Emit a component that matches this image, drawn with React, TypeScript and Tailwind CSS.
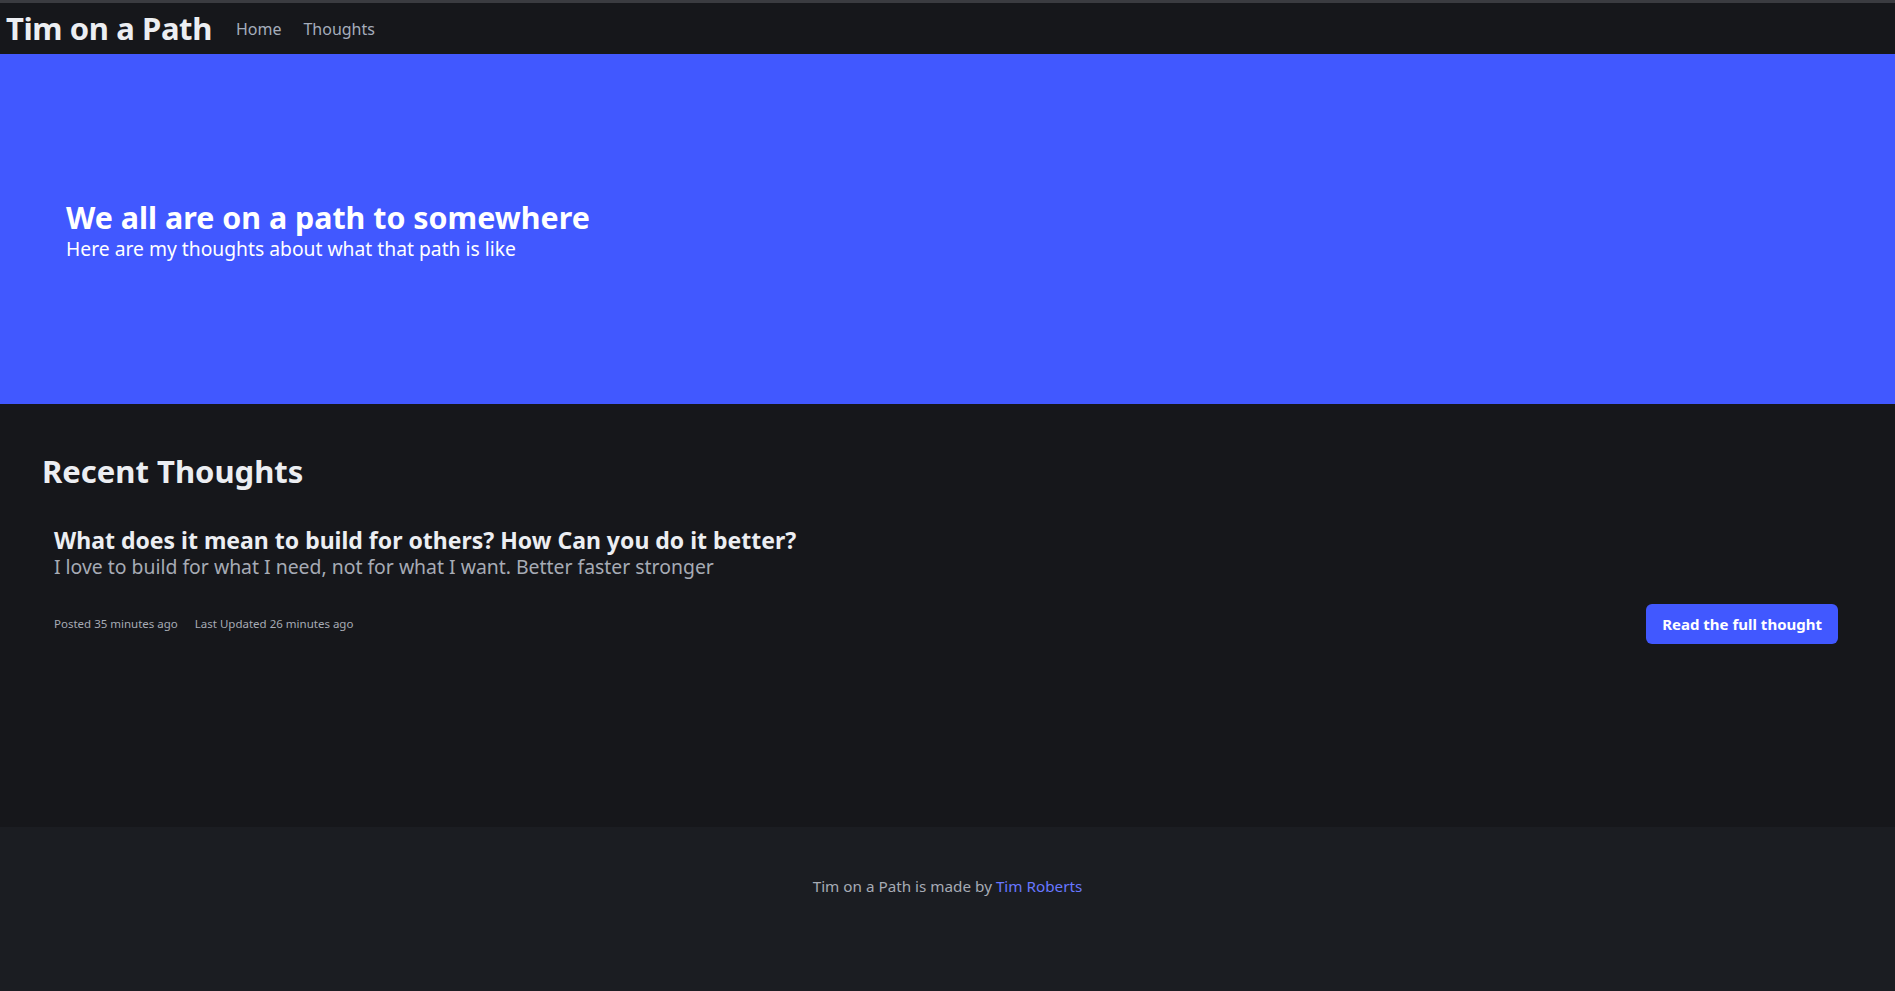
const thoughts = [
  {
    title: "What does it mean to build for others? How Can you do it better?",
    summary: "I love to build for what I need, not for what I want. Better faster stronger",
    posted: "35 minutes ago",
    updated: "26 minutes ago",
  },
];

const App = () => {
  return (
    <div className="min-h-screen flex flex-col bg-[#16171b] font-['Noto_Sans',sans-serif]">
      {/* Navbar */}
      <nav className="h-[54px] border-t-[3px] border-[#3a3b40] bg-[#16171b] flex items-center pl-[6px]">
        <a className="text-[31px] font-bold text-[#eceef2] leading-none tracking-[-0.4px]">Tim on a Path</a>
        <div className="ml-[24px] flex gap-[22px] text-[16px] text-[#a5adbb]">
          <a>Home</a>
          <a>Thoughts</a>
        </div>
      </nav>

      {/* Hero */}
      <section className="h-[350px] bg-[#4158ff] flex items-center px-[66px]">
        <div className="pt-[2px]">
          <h1 className="text-[30.4px] font-bold text-white leading-[1.2]">We all are on a path to somewhere</h1>
          <p className="mt-[2px] text-[19.3px] text-white leading-[1.15]">Here are my thoughts about what that path is like</p>
        </div>
      </section>

      {/* Recent thoughts */}
      <section className="h-[423px] bg-[#16171b] px-[42px] pt-[48px]">
        <h2 className="text-[31px] font-bold text-[#eceef2] leading-tight">Recent Thoughts</h2>
        <div className="mt-[35px] flex flex-col gap-6">
          {thoughts.map((t) => (
            <div key={t.title} className="pl-[12px] pr-[15px]">
              <h3 className="text-[23px] font-bold text-[#eceef2] leading-tight">{t.title}</h3>
              <p className="text-[19.4px] text-[#a6abb5] leading-tight">{t.summary}</p>
              <div className="mt-[25px] flex items-center justify-between">
                <div className="flex gap-[17px] text-[11.5px] text-[#a6abb5]">
                  <span>Posted {t.posted}</span>
                  <span>Last Updated {t.updated}</span>
                </div>
                <button className="h-[40px] px-[16px] rounded-[6px] bg-[#4158ff] text-[15px] font-bold text-white">
                  Read the full thought
                </button>
              </div>
            </div>
          ))}
        </div>
      </section>

      {/* Footer */}
      <footer className="flex-1 min-h-[164px] bg-[#1b1d22] flex justify-center pt-[48px]">
        <p className="text-[15.25px] text-[#a6abb5]">
          Tim on a Path is made by <a className="text-[#6877ff]">Tim Roberts</a>
        </p>
      </footer>
    </div>
  );
};

export default App;
